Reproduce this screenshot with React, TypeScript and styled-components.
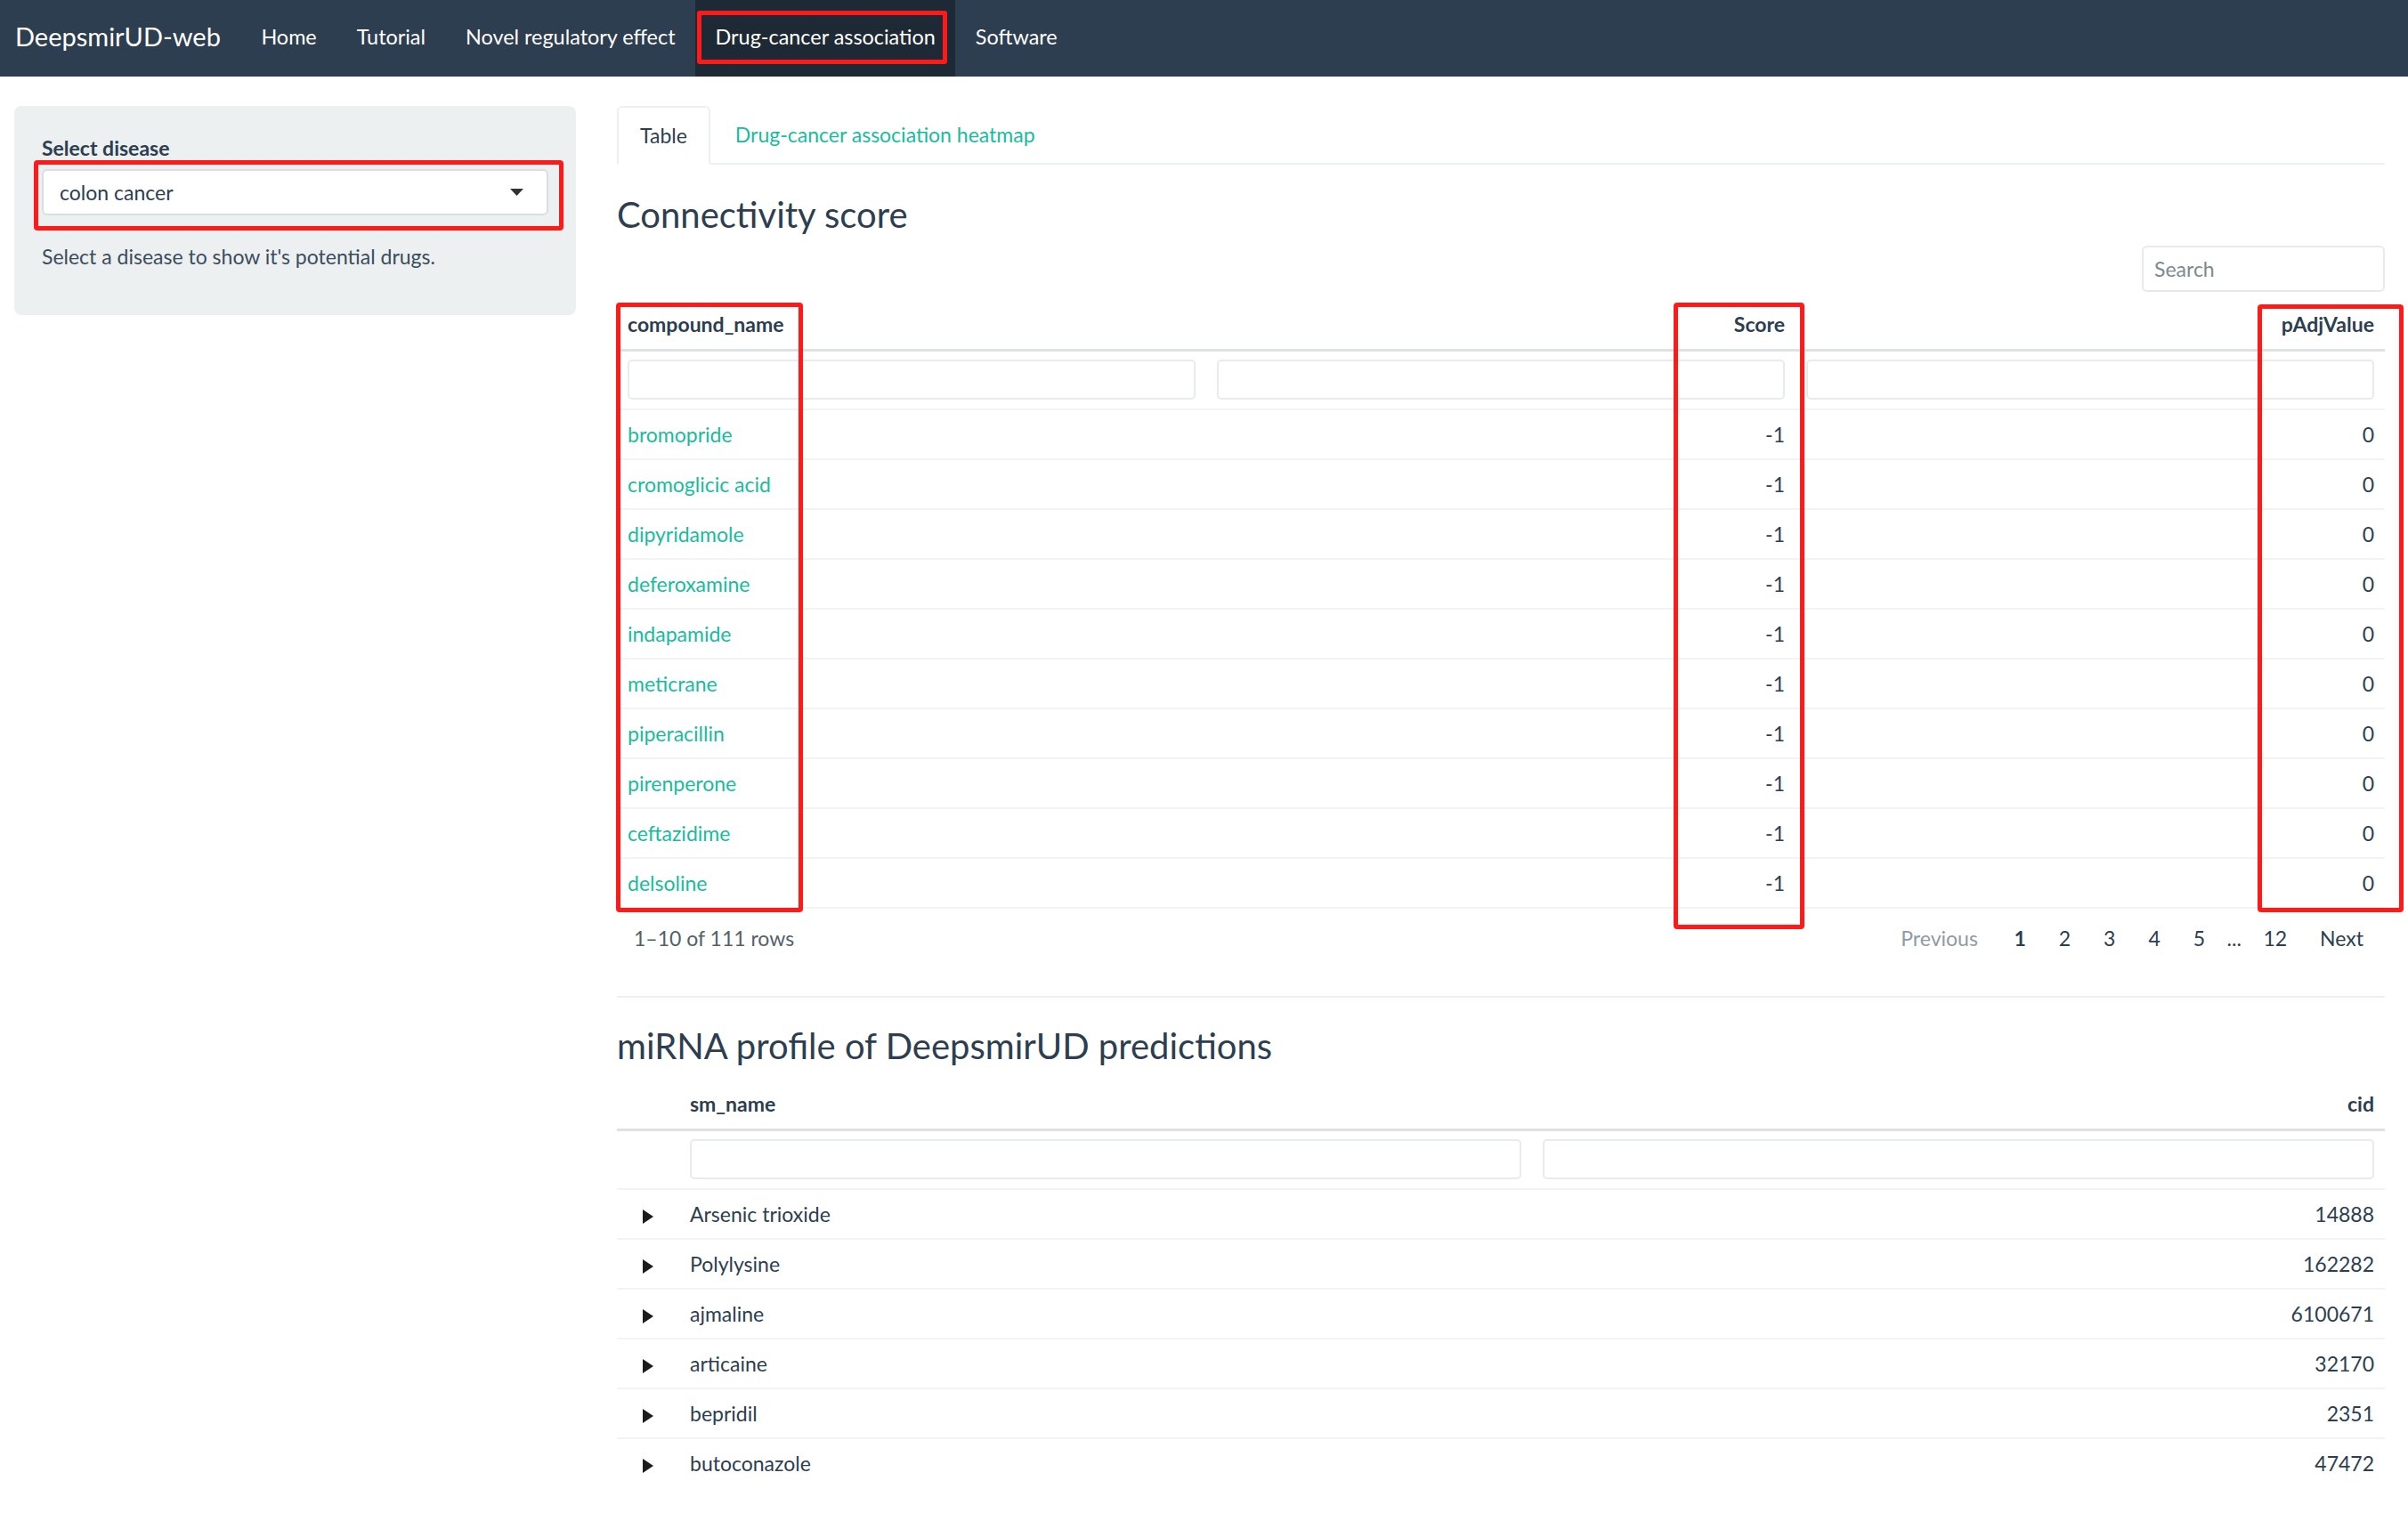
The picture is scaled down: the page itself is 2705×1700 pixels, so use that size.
import React from "react";
import styled, { createGlobalStyle, css } from "styled-components";

const GlobalStyle = createGlobalStyle`
  html, body { margin: 0; padding: 0; background: #ffffff; }
  body {
    font-family: Lato, "Open Sans", "Liberation Sans", sans-serif;
    font-size: 23px;
    line-height: 30px;
    color: #2c3e50;
  }
  * { box-sizing: border-box; }
`;

const Navbar = styled.nav`
  height: 86px;
  background: #2c3e50;
  display: flex;
  align-items: stretch;
  padding-left: 17px;
`;

const Brand = styled.div`
  display: flex;
  align-items: center;
  font-size: 29px;
  color: #ffffff;
  margin-right: 23px;
  padding-bottom: 4px;
`;

const NavItem = styled.div<{ $active?: boolean }>`
  position: relative;
  display: flex;
  align-items: center;
  padding: 0 22.5px 4px;
  color: #ffffff;
  font-size: 23.4px;
  background: ${(p) => (p.$active ? "#1d2934" : "transparent")};
  ${(p) =>
    p.$active &&
    css`
      &::after {
        content: "";
        position: absolute;
        left: 2px;
        right: 9px;
        top: 12px;
        bottom: 14px;
        border: 5px solid #ff1a1a;
        border-radius: 3px;
      }
    `}
`;

const Page = styled.div`
  display: flex;
  align-items: flex-start;
  gap: 46px;
  padding: 33px 26px 0 16px;
`;

const Sidebar = styled.aside`
  flex: none;
  width: 631px;
  background: #ecf0f1;
  border-radius: 8px;
  padding: 32px 31px 51px;
`;

const Label = styled.div`
  font-weight: 700;
  margin-bottom: 9px;
`;

const SelectWrap = styled.div`
  position: relative;
  &::after {
    content: "";
    position: absolute;
    left: -9px;
    right: -17px;
    top: -10px;
    bottom: -17px;
    border: 5px solid #ff1a1a;
    border-radius: 4px;
  }
`;

const SelectBox = styled.div`
  height: 52px;
  background: #ffffff;
  border: 2px solid #d9dee1;
  border-radius: 6px;
  display: flex;
  align-items: center;
  justify-content: space-between;
  padding: 0 26px 0 18px;
`;

const HelpText = styled.div`
  margin-top: 31px;
  color: #3c4c5c;
`;

const Main = styled.main`
  flex: 1;
  min-width: 0;
`;

const Tabs = styled.div`
  display: flex;
  height: 66px;
  border-bottom: 2px solid #ecf0f1;
`;

const Tab = styled.div<{ $active?: boolean }>`
  display: flex;
  align-items: center;
  padding: 0 24px;
  margin-right: 2px;
  border: 2px solid transparent;
  border-radius: 6px 6px 0 0;
  color: #18bc9c;
  ${(p) =>
    p.$active &&
    css`
      color: #2c3e50;
      border-color: #ecf0f1;
      border-bottom-color: #ffffff;
      margin-bottom: -2px;
    `}
`;

const Heading = styled.h3`
  margin: 32px 0 5px;
  font-size: 40px;
  line-height: 48px;
  font-weight: 400;
  color: #2c3e50;
`;

const SearchRow = styled.div`
  display: flex;
  justify-content: flex-end;
  margin-top: 11px;
`;

const SearchInput = styled.div`
  width: 273px;
  height: 52px;
  border: 2px solid #e6eaec;
  border-radius: 6px;
  padding: 0 12px;
  display: flex;
  align-items: center;
  color: #7b8a8b;
`;

const TableWrap = styled.div`
  position: relative;
`;

const Table = styled.table`
  width: 100%;
  table-layout: fixed;
  border-collapse: separate;
  border-spacing: 0;
`;

const Th = styled.th<{ $align?: "left" | "right" }>`
  text-align: ${(p) => p.$align || "left"};
  font-weight: 700;
  padding: 21px 12px 13px;
  border-bottom: 3px solid #dee2e6;
  line-height: 30px;
`;

const FilterCell = styled.td`
  padding: 9px 12px 10px;
  border-bottom: 2px solid #f1f3f4;
`;

const FilterInput = styled.div`
  height: 45px;
  border: 2px solid #e8ebed;
  border-radius: 5px;
  background: #ffffff;
`;

const BodyRow = styled.tr<{ $last?: boolean }>`
  ${(p) =>
    p.$last &&
    css`
      & > td { border-bottom-color: transparent; }
    `}
`;

const Td = styled.td<{ $align?: "left" | "right" | "center" }>`
  text-align: ${(p) => p.$align || "left"};
  padding: 12px 12px;
  line-height: 30px;
  border-bottom: 2px solid #f1f3f4;
  color: #2c3e50;
  svg { vertical-align: middle; }
`;

const Link = styled.span`
  color: #18bc9c;
`;

const Annotation = styled.div<{ $l: number; $t: number; $w: number; $h: number }>`
  position: absolute;
  left: ${(p) => p.$l}px;
  top: ${(p) => p.$t}px;
  width: ${(p) => p.$w}px;
  height: ${(p) => p.$h}px;
  border: 5px solid #ff1a1a;
  border-radius: 4px;
  pointer-events: none;
`;

const Footer = styled.div`
  display: flex;
  justify-content: space-between;
  align-items: center;
  margin-top: 18px;
  padding: 0 24px 0 19px;
`;

const RowCount = styled.div`
  color: #52606d;
`;

const Pager = styled.div`
  display: flex;
  align-items: center;
`;

const PageLink = styled.span<{ $muted?: boolean; $current?: boolean; $tight?: boolean }>`
  padding: ${(p) => (p.$tight ? "0 6px" : "0 18.5px")};
  color: ${(p) => (p.$muted ? "#8e9ba4" : "#2c3e50")};
  font-weight: ${(p) => (p.$current ? 700 : 400)};
  &:first-child { padding-left: 0; padding-right: 22px; }
  &:last-child { padding-right: 0; }
`;

const Rule = styled.hr`
  margin: 50px 0 0;
  border: none;
  border-top: 2px solid #ecf0f1;
`;

const Heading2 = styled(Heading)`
  margin-top: 30px;
`;

const Triangle = () => (
  <svg width="12" height="16" viewBox="0 0 12 16">
    <polygon points="0,0 12,8 0,16" fill="#1c1c1c" />
  </svg>
);

const Caret = () => (
  <svg width="15" height="8" viewBox="0 0 15 8">
    <polygon points="0,0 15,0 7.5,8" fill="#333333" />
  </svg>
);

const compounds = [
  "bromopride",
  "cromoglicic acid",
  "dipyridamole",
  "deferoxamine",
  "indapamide",
  "meticrane",
  "piperacillin",
  "pirenperone",
  "ceftazidime",
  "delsoline",
];

const profiles: [string, string][] = [
  ["Arsenic trioxide", "14888"],
  ["Polylysine", "162282"],
  ["ajmaline", "6100671"],
  ["articaine", "32170"],
  ["bepridil", "2351"],
  ["butoconazole", "47472"],
];

export default function App() {
  return (
    <>
      <GlobalStyle />
      <Navbar>
        <Brand>DeepsmirUD-web</Brand>
        <NavItem>Home</NavItem>
        <NavItem>Tutorial</NavItem>
        <NavItem>Novel regulatory effect</NavItem>
        <NavItem $active>Drug-cancer association</NavItem>
        <NavItem>Software</NavItem>
      </Navbar>
      <Page>
        <Sidebar>
          <Label>Select disease</Label>
          <SelectWrap>
            <SelectBox>
              <span>colon cancer</span>
              <Caret />
            </SelectBox>
          </SelectWrap>
          <HelpText>Select a disease to show it's potential drugs.</HelpText>
        </Sidebar>
        <Main>
          <Tabs>
            <Tab $active>Table</Tab>
            <Tab>Drug-cancer association heatmap</Tab>
          </Tabs>
          <Heading>Connectivity score</Heading>
          <SearchRow>
            <SearchInput>Search</SearchInput>
          </SearchRow>
          <TableWrap>
            <Table>
              <colgroup>
                <col style={{ width: "33.333%" }} />
                <col style={{ width: "33.333%" }} />
                <col style={{ width: "33.333%" }} />
              </colgroup>
              <thead>
                <tr>
                  <Th>compound_name</Th>
                  <Th $align="right">Score</Th>
                  <Th $align="right">pAdjValue</Th>
                </tr>
              </thead>
              <tbody>
                <tr>
                  <FilterCell><FilterInput /></FilterCell>
                  <FilterCell><FilterInput /></FilterCell>
                  <FilterCell><FilterInput /></FilterCell>
                </tr>
                {compounds.map((c) => (
                  <BodyRow key={c}>
                    <Td><Link>{c}</Link></Td>
                    <Td $align="right">-1</Td>
                    <Td $align="right">0</Td>
                  </BodyRow>
                ))}
              </tbody>
            </Table>
            <Annotation $l={-1} $t={12} $w={210} $h={685} />
            <Annotation $l={1187} $t={12} $w={147} $h={704} />
            <Annotation $l={1843} $t={14} $w={164} $h={683} />
          </TableWrap>
          <Footer>
            <RowCount>1–10 of 111 rows</RowCount>
            <Pager>
              <PageLink $muted>Previous</PageLink>
              <PageLink $current>1</PageLink>
              <PageLink>2</PageLink>
              <PageLink>3</PageLink>
              <PageLink>4</PageLink>
              <PageLink>5</PageLink>
              <PageLink $tight>...</PageLink>
              <PageLink>12</PageLink>
              <PageLink>Next</PageLink>
            </Pager>
          </Footer>
          <Rule />
          <Heading2>miRNA profile of DeepsmirUD predictions</Heading2>
          <Table>
            <colgroup>
              <col style={{ width: "70px" }} />
              <col />
              <col />
            </colgroup>
            <thead>
              <tr>
                <Th />
                <Th>sm_name</Th>
                <Th $align="right">cid</Th>
              </tr>
            </thead>
            <tbody>
              <tr>
                <FilterCell />
                <FilterCell><FilterInput /></FilterCell>
                <FilterCell><FilterInput /></FilterCell>
              </tr>
              {profiles.map(([name, cid], i) => (
                <BodyRow key={name} $last={i === profiles.length - 1}>
                  <Td $align="center"><Triangle /></Td>
                  <Td>{name}</Td>
                  <Td $align="right">{cid}</Td>
                </BodyRow>
              ))}
            </tbody>
          </Table>
        </Main>
      </Page>
    </>
  );
}
